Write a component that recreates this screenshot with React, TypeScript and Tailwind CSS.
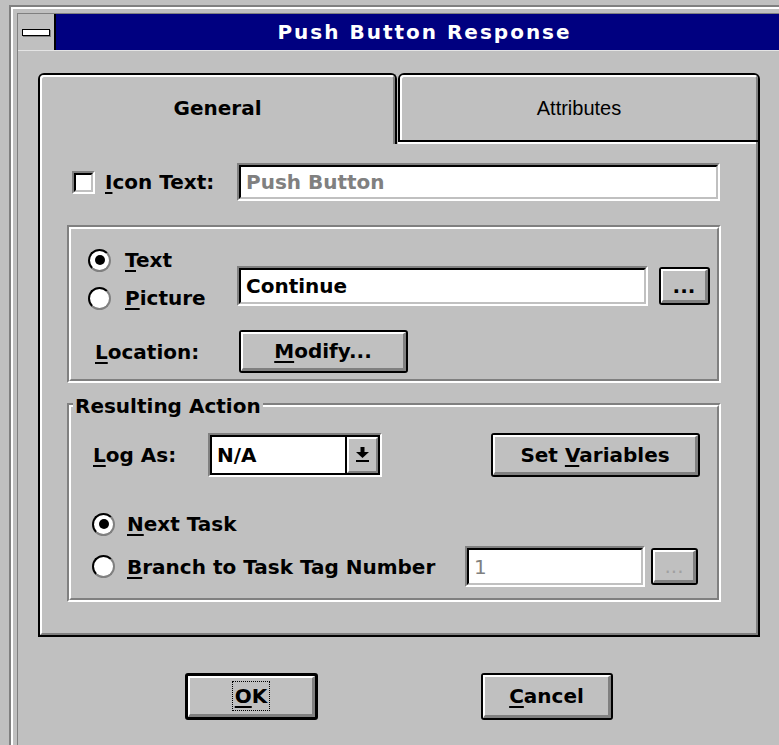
import type { ReactNode } from 'react';

// mnemonic letter
function Key({ children }: { children: ReactNode }) {
  return <span className="underline decoration-2 underline-offset-[3px]">{children}</span>;
}

// 3D sunken edit box (grey/white outer, black/silver inner)
function Sunken({ className = '', children }: { className?: string; children?: ReactNode }) {
  return (
    <div className={`border-2 border-t-[#808080] border-l-[#808080] border-r-white border-b-white ${className}`}>
      <div className="h-full w-full flex items-center pl-[5px] border-2 border-t-black border-l-black border-r-[#c0c0c0] border-b-[#c0c0c0] bg-white">
        {children}
      </div>
    </div>
  );
}

function Button({ className = '', strong = false, children }: { className?: string; strong?: boolean; children: ReactNode }) {
  return (
    <div className={`${strong ? 'border-[3px]' : 'border-2'} border-black rounded-[3px] bg-[#c0c0c0] ${className}`}>
      <div className="h-full w-full flex items-center justify-center border-t-2 border-l-2 border-r-[3px] border-b-[3px] border-t-white border-l-white border-r-[#808080] border-b-[#808080]">
        {children}
      </div>
    </div>
  );
}

function Radio({ checked = false }: { checked?: boolean }) {
  return (
    <div className="w-[23px] h-[23px] shrink-0 rounded-full border-2 border-t-black border-l-black border-r-[#808080] border-b-[#808080] bg-white flex items-center justify-center">
      {checked && <div className="w-[10px] h-[10px] rounded-full bg-black" />}
    </div>
  );
}

// etched group frame
function Group({ className = '', legend, children }: { className?: string; legend?: string; children: ReactNode }) {
  return (
    <div className={`relative border-2 border-t-[#808080] border-l-[#808080] border-r-white border-b-white ${className}`}>
      <div className="h-full border-2 border-t-white border-l-white border-r-[#808080] border-b-[#808080]">
        {children}
      </div>
      {legend && <span className="absolute left-[4px] -top-[11px] px-[2px] bg-[#c0c0c0]">{legend}</span>}
    </div>
  );
}

function DropArrow() {
  return (
    <svg width="13" height="16" viewBox="0 0 13 16">
      <rect x="4.5" y="0" width="4" height="5" fill="#000" />
      <polygon points="0,5 13,5 6.5,11" fill="#000" />
      <rect x="0" y="13" width="13" height="2" fill="#000" />
    </svg>
  );
}

export default function App() {
  return (
    <div className="w-[779px] h-[745px] overflow-hidden bg-[#c0c0c0] font-['DejaVu_Sans',sans-serif] font-bold text-[20px] leading-[24px] text-black">
      <div className="ml-[9px] mt-[5px] w-[784px] h-[760px] border-l-2 border-t-2 border-[#808080]">
        <div className="h-full border-l-2 border-t-2 border-white pl-[4px] pt-[4px]">
          <div className="h-full flex flex-col border-l border-t border-[#808080]">
            {/* title bar */}
            <div className="h-[36px] flex shrink-0">
              <div className="w-[38px] h-full border-r-2 border-black bg-[#c0c0c0] flex items-center justify-center">
                <div className="w-[28px] h-[7px] border border-black bg-white shadow-[1px_1px_0_#808080]" />
              </div>
              <div className="flex-1 bg-[#000080] text-white tracking-[2px] flex items-center justify-center">
                Push Button Response
              </div>
            </div>
            <div className="h-px bg-[#e4e4e4] shrink-0" />

            {/* client */}
            <div className="flex-1 pl-[20px] pt-[22px]">
              {/* tabs */}
              <div className="flex gap-[1px] w-[722px]">
                <div className="w-[359px] h-[71px] border-t-2 border-l-2 border-r-2 border-black rounded-t-[6px]">
                  <div className="h-full flex justify-center pt-[19px] border-t-2 border-l-2 border-r-2 border-t-white border-l-white border-r-[#808080] rounded-t-[4px]">
                    General
                  </div>
                </div>
                <div className="w-[362px] flex flex-col">
                  <div className="h-[69px] border-2 border-black rounded-t-[6px]">
                    <div className="h-full flex justify-center pt-[19px] border-t-2 border-l-2 border-r-2 border-t-white border-l-white border-r-[#808080] rounded-t-[4px] font-['Liberation_Sans',sans-serif] font-normal">
                      Attributes
                    </div>
                  </div>
                  <div className="h-[2px] flex">
                    <div className="flex-1 bg-white" />
                    <div className="w-[2px] bg-[#808080]" />
                    <div className="w-[2px] bg-black" />
                  </div>
                </div>
              </div>

              {/* tab page */}
              <div className="w-[722px] h-[493px] border-l-2 border-r-2 border-b-2 border-black">
                <div className="h-full pl-[25px] pt-[19px] border-l-2 border-r-2 border-b-2 border-l-white border-r-[#808080] border-b-[#808080]">
                  <div className="flex items-center h-[38px]">
                    <Sunken className="ml-[5px] w-[23px] h-[23px]" />
                    <div className="ml-[10px] w-[132px]"><Key>I</Key>con Text:</div>
                    <Sunken className="w-[483px] h-[38px]">
                      <span className="text-[#808080]">Push Button</span>
                    </Sunken>
                  </div>

                  <Group className="mt-[24px] w-[654px] h-[158px]">
                    <div className="flex mt-[12px]">
                      <div className="w-[166px] pl-[17px] flex flex-col">
                        <div className="flex items-center h-[38px] gap-[14px]">
                          <Radio checked />
                          <span><Key>T</Key>ext</span>
                        </div>
                        <div className="flex items-center h-[38px] gap-[14px]">
                          <Radio />
                          <span><Key>P</Key>icture</span>
                        </div>
                      </div>
                      <Sunken className="mt-[25px] w-[411px] h-[40px]">Continue</Sunken>
                      <Button className="ml-[11px] mt-[26px] w-[51px] h-[38px]">...</Button>
                    </div>
                    <div className="flex items-center mt-[13px] h-[43px]">
                      <div className="w-[168px] pl-[24px]"><Key>L</Key>ocation:</div>
                      <Button className="w-[169px] h-[43px]"><span><Key>M</Key>odify...</span></Button>
                    </div>
                  </Group>

                  <Group className="mt-[20px] w-[654px] h-[199px]" legend="Resulting Action">
                    <div className="flex items-center mt-[26px] h-[44px]">
                      <div className="w-[137px] pl-[22px]"><Key>L</Key>og As:</div>
                      <div className="w-[174px] h-[44px] border-2 border-t-[#808080] border-l-[#808080] border-r-white border-b-white">
                        <div className="h-full flex border-2 border-black bg-white">
                          <div className="flex-1 flex items-center pl-[5px]">N/A</div>
                          <div className="w-[33px] border-l-2 border-black bg-[#c0c0c0]">
                            <div className="h-full flex items-center justify-center border-2 border-t-white border-l-white border-r-[#808080] border-b-[#808080]">
                              <DropArrow />
                            </div>
                          </div>
                        </div>
                      </div>
                      <Button className="ml-[109px] w-[209px] h-[44px]"><span>Set <Key>V</Key>ariables</span></Button>
                    </div>
                    <div className="flex items-center h-[38px] mt-[28px] pl-[21px] gap-[12px]">
                      <Radio checked />
                      <span><Key>N</Key>ext Task</span>
                    </div>
                    <div className="flex items-center h-[41px] mt-[3px] pl-[21px]">
                      <Radio />
                      <span className="ml-[12px] w-[338px]"><Key>B</Key>ranch to Task Tag Number</span>
                      <Sunken className="w-[180px] h-[41px]"><span className="text-[#808080] font-normal">1</span></Sunken>
                      <Button className="ml-[6px] w-[47px] h-[37px]"><span className="text-[#a0a0a0] font-normal">...</span></Button>
                    </div>
                  </Group>
                </div>
              </div>

              {/* dialog buttons */}
              <div className="flex mt-[36px]">
                <Button strong className="ml-[147px] w-[133px] h-[47px]">
                  <span className="border border-dotted border-black px-[2px] py-[2px]"><Key>O</Key>K</span>
                </Button>
                <Button className="ml-[163px] w-[132px] h-[47px]"><span><Key>C</Key>ancel</span></Button>
              </div>
            </div>
          </div>
        </div>
      </div>
    </div>
  );
}
